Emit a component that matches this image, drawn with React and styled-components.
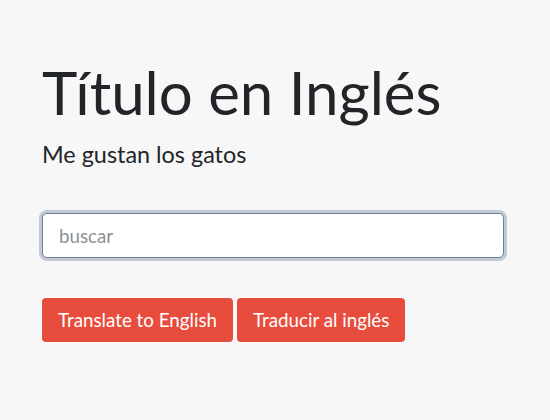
import React from "react";
import styled, { createGlobalStyle } from "styled-components";

const GlobalStyle = createGlobalStyle`
  body {
    margin: 0;
    background: #f7f7f7;
    font-family: Lato, "Open Sans", sans-serif;
    font-size: 18.75px;
    color: #212529;
  }
`;

const Page = styled.main`
  padding: 56px 46px 0 42px;
`;

const Title = styled.h1`
  margin: 0;
  font-size: 60px;
  font-weight: 400;
  line-height: 72px;
`;

const Lead = styled.p`
  margin: 9px 0 0;
  font-size: 23.4px;
  line-height: 35px;
`;

const Search = styled.input`
  display: block;
  box-sizing: border-box;
  width: 100%;
  height: 45px;
  margin-top: 41px;
  padding: 0 16px;
  font-family: inherit;
  font-size: 18.75px;
  color: #212529;
  background: #fff;
  border: 1px solid #6a7f95;
  border-radius: 5px;
  box-shadow: 0 0 0 3px #c3c9d1;
  outline: none;

  &::placeholder {
    color: #8a9095;
  }
`;

const Actions = styled.div`
  display: flex;
  gap: 4px;
  margin-top: 40px;
`;

const Button = styled.button`
  padding: 8px 16px;
  font-family: inherit;
  font-size: 18.75px;
  line-height: 28px;
  color: #fff;
  background: #e74c3c;
  border: none;
  border-radius: 4px;
  cursor: pointer;
`;

export default function App() {
  return (
    <>
      <GlobalStyle />
      <Page>
        <Title>Título en Inglés</Title>
        <Lead>Me gustan los gatos</Lead>
        <Search placeholder="buscar" />
        <Actions>
          <Button>Translate to English</Button>
          <Button>Traducir al inglés</Button>
        </Actions>
      </Page>
    </>
  );
}
